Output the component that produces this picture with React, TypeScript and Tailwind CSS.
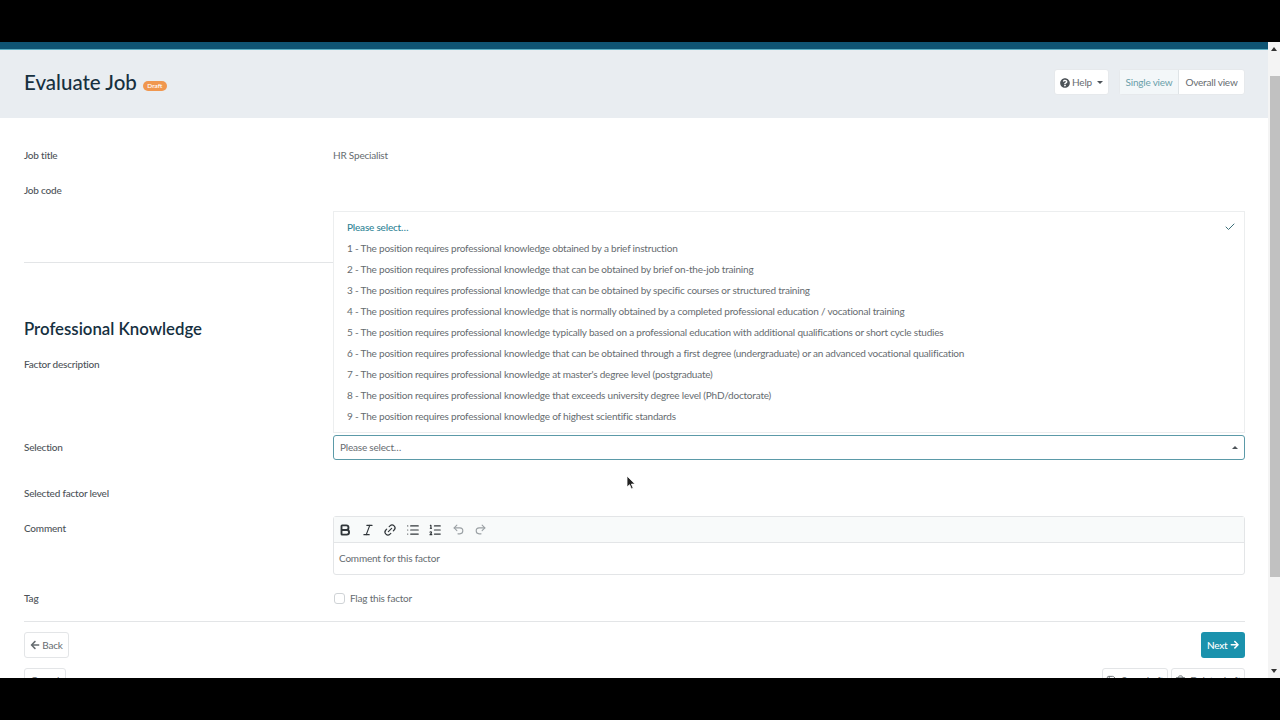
import React from "react";
import { Bold, Check, Italic, Link2, List, ListOrdered, Redo2, Save, Trash2, Undo2 } from "lucide-react";
import { FaArrowLeft, FaArrowRight, FaQuestionCircle } from "react-icons/fa";

const levels = [
  "1 - The position requires professional knowledge obtained by a brief instruction",
  "2 - The position requires professional knowledge that can be obtained by brief on-the-job training",
  "3 - The position requires professional knowledge that can be obtained by specific courses or structured training",
  "4 - The position requires professional knowledge that is normally obtained by a completed professional education / vocational training",
  "5 - The position requires professional knowledge typically based on a professional education with additional qualifications or short cycle studies",
  "6 - The position requires professional knowledge that can be obtained through a first degree (undergraduate) or an advanced vocational qualification",
  "7 - The position requires professional knowledge at master's degree level (postgraduate)",
  "8 - The position requires professional knowledge that exceeds university degree level (PhD/doctorate)",
  "9 - The position requires professional knowledge of highest scientific standards",
];

const Row = ({ label, className, children }: { label: string; className: string; children?: React.ReactNode }) => (
  <div className={`flex items-center ${className}`}>
    <div className="w-[309px] shrink-0 font-medium text-[#4d5358]">{label}</div>
    <div className="flex-1 min-w-0">{children}</div>
  </div>
);

const App = () => {
  return (
    <div className="h-screen flex flex-col bg-black overflow-hidden text-[10px] tracking-[-0.2px] text-[#666c70] font-['Lato',sans-serif]">
      <div className="h-[42px] shrink-0" />
      <div className="flex-1 min-h-0 flex">
        <div className="relative flex-1 min-w-0 bg-white overflow-hidden">
          <div className="h-[8px] bg-[#0f5473] border-b border-[#5fb0c4]" />
          <div className="h-[68px] bg-[#e9edf1] flex items-center justify-between pl-6 pr-[23px] pb-[4px]">
            <div className="flex items-center gap-[6px]">
              <h1 className="text-[20.5px] tracking-normal font-medium text-[#16303f]">Evaluate Job</h1>
              <span className="mt-2 h-[10px] w-[24px] text-center rounded-full bg-[#f0974f] text-white text-[6.5px] tracking-normal font-semibold leading-[10px]">Draft</span>
            </div>
            <div className="flex items-center gap-[10px]">
              <button className="h-[26px] w-[55px] pt-px flex items-center justify-center gap-[2px] bg-white rounded-[3px] border border-[#e6e9ec]">
                <FaQuestionCircle className="text-[#4d5358] text-[10px]" />
                Help
                <span className="ml-[3px] border-x-[3px] border-x-transparent border-t-[3px] border-t-[#4d5358]" />
              </button>
              <div className="flex h-[26px] rounded-[3px] border border-[#e6e9ec] bg-white">
                <div className="w-[59px] pt-px flex items-center justify-center bg-[#f3f7f9] text-[#6a9ea9] border-r border-[#dfe4e7]">Single view</div>
                <div className="w-[65px] pt-px flex items-center justify-center">Overall view</div>
              </div>
            </div>
          </div>

          <div className="px-6 pr-[23px]">
            <Row label="Job title" className="h-[20px] mt-[27px]">HR Specialist</Row>
            <Row label="Job code" className="h-[20px] mt-[15px]" />
            <div className="border-t border-[#e3e5e7] mt-[62px]" />
            <h2 className="mt-[55px] h-[22px] leading-[22px] text-[16.8px] tracking-normal font-semibold text-[#16303f]">Professional Knowledge</h2>
            <Row label="Factor description" className="h-[20px] mt-[14px]" />
            <Row label="Selection" className="h-[25px] mt-[61px]">
              <div className="h-[25px] rounded-[3px] border border-[#5b9aa8] flex items-center justify-between px-[6px]">
                Please select…
                <span className="border-x-[3px] border-x-transparent border-b-[3px] border-b-[#4d5358]" />
              </div>
            </Row>
            <Row label="Selected factor level" className="h-[20px] mt-[23px]" />
            <div className="flex mt-[13px]">
              <div className="w-[309px] shrink-0 pt-[2px] font-medium text-[#4d5358] leading-[20px]">Comment</div>
              <div className="flex-1 h-[59px] rounded-[3px] border border-[#e3e5e7]">
                <div className="h-[26px] flex items-center gap-[8.5px] px-[4px] bg-[#f8fafa] border-b border-[#e3e5e7] text-[#30363a]">
                  <Bold size={14} strokeWidth={3.2} />
                  <Italic size={14} />
                  <Link2 size={14} className="-rotate-45" />
                  <List size={14} />
                  <ListOrdered size={14} />
                  <Undo2 size={13} className="text-[#9aa0a4] ml-[1px]" />
                  <Redo2 size={13} className="text-[#9aa0a4] ml-[1px]" />
                </div>
                <div className="px-[5px] pt-[7px] leading-[16px]">Comment for this factor</div>
              </div>
            </div>
            <Row label="Tag" className="h-[20px] mt-[13px]">
              <label className="flex items-center gap-[5px]">
                <span className="ml-[1px] w-[11px] h-[11px] rounded-[3px] border border-[#cfd3d6] bg-white" />
                Flag this factor
              </label>
            </Row>
            <div className="border-t border-[#e3e5e7] mt-[13px]" />
            <div className="flex justify-between mt-[10px]">
              <button className="h-[26px] w-[45px] flex items-center justify-center gap-[2px] rounded-[3px] border border-[#e3e5e7] bg-white">
                <FaArrowLeft className="text-[10px]" />
                Back
              </button>
              <button className="h-[26px] w-[44px] flex items-center justify-center gap-[2px] rounded-[3px] bg-[#1b92ad] text-white font-medium">
                Next
                <FaArrowRight className="text-[9.5px]" />
              </button>
            </div>
            <div className="flex justify-between mt-[10px]">
              <button className="h-[26px] w-[42px] pb-[2px] rounded-[3px] border border-[#e3e5e7] bg-white">Cancel</button>
              <div className="flex gap-[3px]">
                <button className="h-[26px] w-[66px] pb-[2px] flex items-center justify-center gap-1 rounded-[3px] border border-[#e3e5e7] bg-white whitespace-nowrap">
                  <Save size={11} />
                  Save draft
                </button>
                <button className="h-[26px] w-[74px] pb-[2px] flex items-center justify-center gap-1 rounded-[3px] border border-[#e3e5e7] bg-white whitespace-nowrap">
                  <Trash2 size={11} />
                  Delete draft
                </button>
              </div>
            </div>
          </div>

          {/* opened select menu sits over the factor description */}
          <div className="absolute left-[333px] top-[169px] w-[912px] h-[222px] bg-white border border-[#eceeef] pt-[5px] px-[13px]">
            <div className="h-[20.6px] flex items-center justify-between font-medium text-[#2f8496]">
              Please select…
              <Check size={12} className="text-[#3c6e78] -mr-[5px]" />
            </div>
            {levels.map((level) => (
              <div key={level} className="h-[21.1px] flex items-center whitespace-nowrap">
                {level}
              </div>
            ))}
          </div>

          {/* mouse pointer */}
          <svg className="absolute left-[626px] top-[433px]" width="10" height="15" viewBox="0 0 10 15">
            <path d="M1 1v11l2.6-2.3L5.4 14l1.8-.8-1.8-4.1H9L1 1z" fill="#222" stroke="#fff" strokeWidth="0.8" />
          </svg>
        </div>

        {/* page scrollbar */}
        <div className="w-[12px] shrink-0 bg-[#f4f4f4] flex flex-col items-center justify-between relative py-[5px]">
          <span className="border-x-[3px] border-x-transparent border-b-[4px] border-b-[#333]" />
          <div className="absolute top-[34px] left-[2px] w-[10px] h-[501px] bg-[#c1c1c1]" />
          <span className="border-x-[3px] border-x-transparent border-t-[4px] border-t-[#333]" />
        </div>
      </div>
      <div className="h-[42px] shrink-0" />
    </div>
  );
};

export default App;
